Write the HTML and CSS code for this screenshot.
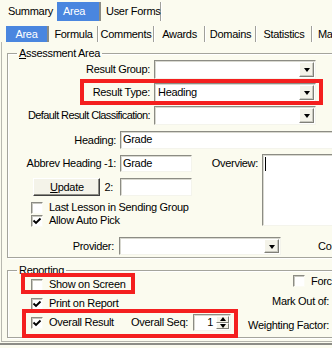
FILE: index.html
```html
<!DOCTYPE html>
<html>
<head>
<meta charset="utf-8">
<title>Area</title>
<link rel="stylesheet" href="styles.css">
</head>
<body>
<div class="win">
  <div class="tabs1">
    <span class="t1 t1-summary">Summary</span>
    <span class="t1 t1-area">Area</span>
    <span class="t1 t1-forms">User Forms</span>
  </div>
  <div class="tabs2">
    <span class="t2 w-area">Area</span>
    <span class="t2 w-formula">Formula</span>
    <span class="t2 w-comments">Comments</span>
    <span class="t2 w-awards">Awards</span>
    <span class="t2 w-domains">Domains</span>
    <span class="t2 w-stats">Statistics</span>
    <span class="t2 w-ma">Ma</span>
  </div>
  <div class="panel">
    <fieldset class="grp assess">
      <legend><u>A</u>ssessment Area</legend>
      <div class="frow">
        <span class="lbl">Result Group:</span>
        <div class="sel sunk"><span class="val"></span><span class="dd"></span></div>
      </div>
      <div class="frow ann ann-type">
        <span class="lbl">Result Type:</span>
        <div class="sel sunk"><span class="val">Heading</span><span class="dd"></span></div>
      </div>
      <div class="frow frow-c">
        <span class="lbl lbl-tight">Default Result Classification:</span>
        <div class="sel sunk"><span class="val"></span><span class="dd"></span></div>
      </div>
      <div class="hrow">
        <span class="lbl2">Heading:</span>
        <div class="inp inp-wide sunk">Grade</div>
      </div>
      <div class="mid">
        <div class="midl">
          <div class="arow">
            <span class="lbl2">Abbrev Heading -1:</span>
            <div class="inp inp-short sunk">Grade</div>
          </div>
          <div class="urow">
            <span class="ucell"><span class="btn"><u>U</u>pdate</span><span class="two">2:</span></span>
            <div class="inp inp-short sunk"></div>
          </div>
          <div class="crow">
            <span class="box"></span><span class="ctext">Last Lesson in Sending Group</span>
          </div>
          <div class="crow">
            <span class="box"><svg class="tick" viewBox="0 0 10 10" width="10" height="10"><path d="M1.5 4.5 L4 7 L8.5 2.5" /></svg></span><span class="ctext">Allow Auto Pick</span>
          </div>
        </div>
        <span class="ovl">Overview:</span>
        <div class="ta sunk"><span class="caret"></span></div>
      </div>
      <div class="prow">
        <span class="lbl3">Provider:</span>
        <div class="sel sunk"><span class="val"></span><span class="dd"></span></div>
        <span class="co">Co</span>
      </div>
    </fieldset>

    <fieldset class="grp rep">
      <legend>Reporting</legend>
      <div class="repin">
        <div class="repl">
          <div class="rrow ann ann-show">
            <span class="box"></span><span class="ctext">Show on Screen</span>
          </div>
          <div class="rrow">
            <span class="box"><svg class="tick" viewBox="0 0 10 10" width="10" height="10"><path d="M1.5 4.5 L4 7 L8.5 2.5" /></svg></span><span class="ctext">Print on Report</span>
          </div>
          <div class="rrow ann ann-overall">
            <span class="chk3"><span class="box"><svg class="tick" viewBox="0 0 10 10" width="10" height="10"><path d="M1.5 4.5 L4 7 L8.5 2.5" /></svg></span><span class="ctext">Overall Result</span></span>
            <span class="seq">Overall Seq:</span>
            <div class="spin sunk">
              <span class="spinv">1</span>
              <span class="spinb"><span class="sb sb-up"></span><span class="sb sb-dn"></span></span>
            </div>
          </div>
        </div>
        <div class="repr">
          <div class="force"><span class="box"></span><span class="ctext">Forc</span></div>
          <div class="rlab rlab-mark">Mark Out of:</div>
          <div class="rlab rlab-wf">Weighting Factor:</div>
        </div>
      </div>
    </fieldset>
  </div>
  <div class="foot"></div>
</div>
</body>
</html>
```

FILE: styles.css
```css
*, *::before, *::after { box-sizing: border-box; }
html, body { margin: 0; padding: 0; }
body {
  width: 332px;
  height: 348px;
  overflow: hidden;
  background: #fbfbef;
  font-family: "Liberation Sans", Arial, sans-serif;
  font-size: 11px;
  letter-spacing: -0.3px;
  line-height: 13px;
  color: #000;
}
.win { width: 332px; height: 348px; overflow: hidden; }

/* top tab row */
.tabs1 { display: flex; height: 26px; }
.t1 { height: 19px; margin-top: 2px; line-height: 19px; white-space: nowrap; flex: none; }
.t1-summary { width: 57px; padding-left: 8px; }
.t1-area { width: 44px; padding-left: 6px; background: #4a86df; color: #fff; border-right: 2px solid #8c8c84; }
.t1-forms { width: 60px; padding-left: 5px; border-right: 1px solid #a0a09a; box-shadow: 1px 0 0 #fff; }

/* second tab row */
.tabs2 { display: flex; height: 16px; }
.t2 {
  height: 16px;
  line-height: 16px;
  text-align: center;
  white-space: nowrap;
  border-right: 1px solid #a0a09a;
  box-shadow: 1px 0 0 #fff;
  margin-right: 1px;
  flex: none;
}
.w-area { margin-left: 6px; width: 43px; background: #4a86df; color: #fff; border-right: 2px solid #8c8c84; box-shadow: none; }
.w-formula { width: 48px; }
.w-comments { width: 55px; }
.w-awards { width: 50px; }
.w-domains { width: 50px; }
.w-stats { width: 55px; }
.w-ma { width: 40px; text-align: left; padding-left: 5px; border-right: none; box-shadow: none; }

/* panel */
.panel {
  width: 440px;
  margin-left: 1px;
  border-left: 1px solid #b8b8b0;
  border-bottom: 1px solid #b4b4ac;
  padding: 4px 0 3px 5px;
}
.foot { width: 440px; height: 2px; margin-top: 1px; background: #8c8c86; }

.grp {
  margin: 0;
  padding: 0 0 2px 0;
  min-width: 0;
  width: 420px;
  border: 1px solid #a4a49c;
  box-shadow: inset 1px 1px 0 #fff, 1px 1px 0 #fff;
}
.grp legend {
  margin-left: 9px;
  padding: 0 2px;
  height: 14px;
  line-height: 14px;
}

/* sunken white field */
.sunk {
  background: #fff;
  border: 1px solid;
  border-color: #8c8c84 #f4f4ec #f4f4ec #8c8c84;
  box-shadow: inset 1px 1px 0 #d8d8d0;
}

/* select rows */
.frow { display: flex; align-items: center; height: 19px; margin-bottom: 4px; }
.frow-c { margin-bottom: 6px; }
.lbl { width: 142px; margin-right: 4px; text-align: right; white-space: nowrap; flex: none; }
.lbl-tight { letter-spacing: -0.6px; }
.sel { width: 162px; height: 19px; display: flex; align-items: stretch; flex: none; padding: 1px; }
.sel .val { flex: 1; padding-left: 2px; line-height: 15px; }
.dd {
  width: 15px;
  flex: none;
  background: #f4f3e9;
  border: 1px solid;
  border-color: #fff #808078 #808078 #fff;
  box-shadow: inset -1px -1px 0 #c8c8c0;
  display: flex;
  align-items: center;
  justify-content: center;
}
.dd::after {
  content: "";
  width: 0;
  height: 0;
  border-left: 3.5px solid transparent;
  border-right: 3.5px solid transparent;
  border-top: 4px solid #000;
  margin-top: 1px;
}

/* text inputs */
.hrow { display: flex; align-items: center; height: 18px; margin-bottom: 5px; }
.lbl2 { width: 108px; margin-right: 4px; text-align: right; white-space: nowrap; flex: none; }
.inp { height: 100%; padding-left: 2px; line-height: 15px; flex: none; }
.inp-wide { width: 300px; }
.inp-short { width: 72px; }

.mid { display: flex; align-items: flex-start; margin-bottom: 10px; }
.midl { width: 184px; padding-top: 1px; flex: none; }
.arow { display: flex; align-items: center; height: 17px; margin-bottom: 6px; }
.urow { display: flex; align-items: center; height: 18px; margin-bottom: 5px; }
.ucell { width: 108px; margin-right: 4px; display: flex; justify-content: flex-end; align-items: center; flex: none; }
.btn {
  width: 67px;
  height: 18px;
  margin-right: 4px;
  background: #f4f3e9;
  border: 1px solid;
  border-color: #fff #404040 #404040 #fff;
  box-shadow: inset -1px -1px 0 #8c8c84;
  text-align: center;
  line-height: 16px;
}
.two { margin-right: 3px; }

.crow { display: flex; align-items: center; height: 13px; padding-left: 23px; white-space: nowrap; }
.box {
  width: 12px;
  height: 12px;
  flex: none;
  background: #fff;
  border: 1px solid;
  border-color: #8c8c84 #fcfcf4 #fcfcf4 #8c8c84;
  box-shadow: inset 1px 1px 0 #c8c8c0;
  display: flex;
  align-items: center;
  justify-content: center;
}
.tick { display: block; }
.tick path { fill: none; stroke: #000; stroke-width: 1.9; }
.ctext { margin-left: 6px; white-space: nowrap; }

.ovl { width: 66px; margin-right: 4px; padding-top: 3px; text-align: right; flex: none; }
.ta { width: 200px; height: 72px; flex: none; padding: 2px 0 0 2px; }
.caret { display: block; width: 1px; height: 14px; background: #000; }

.prow { display: flex; align-items: center; height: 18px; }
.prow .sel { height: 18px; }
.lbl3 { width: 106px; margin-right: 5px; text-align: right; flex: none; }
.co { margin-left: 37px; white-space: nowrap; }

/* reporting */
.rep { margin-top: 5px; padding-bottom: 5px; }
.repin { display: flex; }
.repl { width: 232px; margin-top: -2px; flex: none; }
.rrow { display: flex; align-items: center; height: 19px; padding-left: 23px; }
.chk3 { width: 98px; display: flex; align-items: center; flex: none; white-space: nowrap; }
.seq { width: 59px; margin-right: 5px; text-align: right; white-space: nowrap; flex: none; }
.spin { width: 38px; height: 17px; display: flex; flex: none; padding: 1px; }
.spinv { flex: 1; text-align: right; padding-right: 3px; line-height: 13px; }
.spinb { width: 13px; display: flex; flex-direction: column; flex: none; }
.sb {
  flex: 1;
  background: #f4f3e9;
  border: 1px solid;
  border-color: #fff #808078 #808078 #fff;
  display: flex;
  align-items: center;
  justify-content: center;
}
.sb::after { content: ""; width: 0; height: 0; border-left: 3.5px solid transparent; border-right: 3.5px solid transparent; }
.sb-up::after { border-bottom: 4px solid #000; }
.sb-dn::after { border-top: 4px solid #000; }

.repr { width: 89px; margin-top: -2px; flex: none; }
.force { display: flex; align-items: center; height: 12px; padding-left: 53px; white-space: nowrap; }
.rlab { height: 14px; line-height: 14px; text-align: right; white-space: nowrap; }
.rlab-mark { margin-top: 7px; }
.rlab-wf { margin-top: 10px; }

/* red annotation frames over the form */
.ann { position: relative; }
.ann::after {
  content: "";
  position: absolute;
  border: 4px solid #f41f1f;
  pointer-events: none;
}
.ann-type::after { left: 72px; top: -4px; width: 243px; height: 26px; }
.ann-show::after { left: 13px; top: -2px; width: 114px; height: 21px; }
.ann-overall::after { left: 14px; top: -4px; width: 216px; height: 29px; }
```
